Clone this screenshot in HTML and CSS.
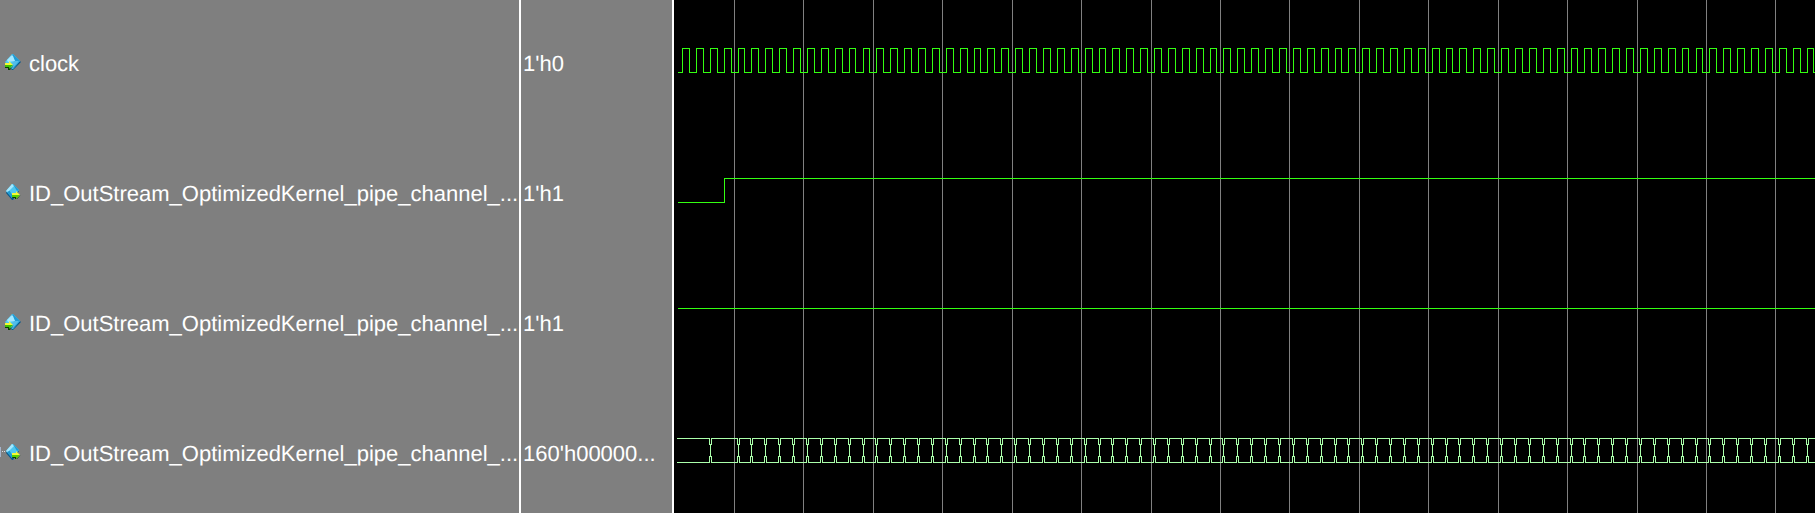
FILE: index.html
```
<!DOCTYPE html>
<html lang="en">
<head>
<meta charset="utf-8">
<title>Waveform viewer</title>
<link rel="stylesheet" href="styles.css">
</head>
<body>
<svg class="defs" aria-hidden="true">
  <defs>
    <symbol id="in" viewBox="0 0 21 16">
      <path fill="#0a5a8c" d="M12 1h1l8 7l-8 8h-1l-2-2Z"/>
      <path fill="#4fc8f0" d="M12 0h1l7 7l-7 8h-1L5 8Z"/>
      <path fill="#1f9bd4" d="M13 0l7 7l-7 8l-1-2l3-6l-4-5Z"/>
      <path fill="#a4e8ff" d="M12 1l1 1l2 5l-7 1l-1-2Z"/>
      <path fill="#53bdea" d="M15 7h4l-6 7l-3-4Z"/>
      <path fill="#063f06" d="M5 12h5v3l4-4l-4 5H8v-2H5Z"/>
      <path fill="#f4f838" d="M5 9h4V7l4 4H5Z"/>
      <path fill="#3fc400" d="M5 11h8l-4 4v-2H5Z"/>
    </symbol>
    <symbol id="out" viewBox="0 0 21 16">
      <path fill="#0a5a8c" d="M12 1h1l6 6l-6 9h-1l-6-7Z"/>
      <path fill="#4fc8f0" d="M12 0h1l6 6l-6 8h-1L6 7Z"/>
      <path fill="#1f9bd4" d="M6 7l3-1l4 6v2h-1Z"/>
      <path fill="#a4e8ff" d="M12 0l2 2l-5 5l-2 1l-1-1Z"/>
      <path fill="#1f9bd4" d="M13 0l6 6l-2 1l-3-5Z"/>
      <path fill="#063f06" d="M13 12h3v3l5-4l-4 4h-2v-1h-3Z"/>
      <path fill="#f4f838" d="M12 9h4V7l4 4h-8Z"/>
      <path fill="#58d000" d="M12 11h8l-4 4v-2h-4Z"/>
    </symbol>
    <symbol id="out-bus" viewBox="0 0 21 16">
      <path fill="#a5b4cc" d="M0 3h1v10H0Z"/>
      <path fill="#d8dce4" d="M2 7h1v1H2ZM4 7h1v1H4Z"/>
      <use href="#out" width="21" height="16"/>
    </symbol>
  </defs>
</svg>
<main class="viewer">
  <section class="column names" aria-label="Signals">
    <div class="row"><svg class="icon"><use href="#in"/></svg><span>clock</span></div>
    <div class="row"><svg class="icon"><use href="#out"/></svg><span>ID_OutStream_OptimizedKernel_pipe_channel_...</span></div>
    <div class="row"><svg class="icon"><use href="#in"/></svg><span>ID_OutStream_OptimizedKernel_pipe_channel_...</span></div>
    <div class="row"><svg class="icon"><use href="#out-bus"/></svg><span>ID_OutStream_OptimizedKernel_pipe_channel_...</span></div>
  </section>
  <section class="column values" aria-label="Values">
    <div class="row">1'h0</div>
    <div class="row">1'h1</div>
    <div class="row">1'h1</div>
    <div class="row">160'h00000...</div>
  </section>
  <section class="waves" aria-label="Waveforms">
    <svg class="plot" shape-rendering="crispEdges">
      <path id="grid" class="grid"/>
      <path id="clock" class="bit"/>
      <path id="valid" class="bit"/>
      <path id="ready" class="bit"/>
      <path id="data" class="bus"/>
    </svg>
  </section>
</main>
<script src="waves.js"></script>
</body>
</html>
```

FILE: styles.css
```
body {
  margin: 0;
  background: #000;
  color: #fff;
  font: 22px/26px "Liberation Sans", Arial, sans-serif;
  text-rendering: geometricPrecision;
}

.defs {
  position: absolute;
  width: 0;
  height: 0;
}

.viewer {
  display: flex;
  min-height: 100vh;
}

.column {
  box-sizing: border-box;
  flex: none;
  background: #7f7f7f;
  border-right: 2px solid #fff;
  white-space: nowrap;
}

.names {
  width: 521px;
}

.values {
  width: 153px;
  padding-left: 2px;
}

.row {
  box-sizing: border-box;
  display: flex;
  align-items: center;
  gap: 8px;
  height: 130px;
  padding-bottom: 2px;
}

.icon {
  flex: none;
  width: 21px;
  height: 16px;
  margin-bottom: 4px;
}

.waves {
  flex: 1;
  min-width: 0;
  overflow: hidden;
}

.plot {
  display: block;
  width: 100%;
  height: 100%;
}

.plot path {
  fill: none;
  stroke-width: 1px;
}

.plot .grid {
  stroke: #808080;
}

.plot .bit {
  stroke: #3f1;
}

.plot .bus {
  stroke: #afa;
}
```

FILE: waves.js
```
const plot = document.querySelector(".plot");
const PERIOD = 13.883;
const GRID_STEP = 69.42;
const SWING = 24;

const set = (id, d) => document.getElementById(id).setAttribute("d", d);
const rise = k => Math.round(8.05 + PERIOD * k) + 0.5;
const fall = k => Math.round(14.9 + PERIOD * k) + 0.5;

function draw() {
  const { width, height } = plot.getBoundingClientRect();
  const cycles = Math.ceil(width / PERIOD);

  let grid = "";
  for (let x = 60.05; x < width; x += GRID_STEP) {
    grid += `M${Math.round(x) + 0.5} 0V${height}`;
  }
  set("grid", grid);

  let clock = "M4 72.5";
  for (let k = 0; k < cycles; k++) {
    clock += `H${rise(k)}v${-SWING}H${fall(k)}v${SWING}`;
  }
  set("clock", clock);

  set("valid", `M4 202.5H${rise(3)}v${-SWING}H${width}`);
  set("ready", `M4 308.5H${width}`);

  let top = "M3 438.5";
  let bottom = "M3 462.5";
  let joins = "";
  for (let k = 2; k < cycles; k++) {
    if (k === 3) continue;
    const x = rise(k);
    top += `H${x - 1}v6h2v-6`;
    bottom += `H${x - 1}v-6h2v6`;
    joins += `M${x} 444v13`;
  }
  set("data", `${top}H${width}${bottom}H${width}${joins}`);
}

draw();
window.addEventListener("resize", draw);
```
